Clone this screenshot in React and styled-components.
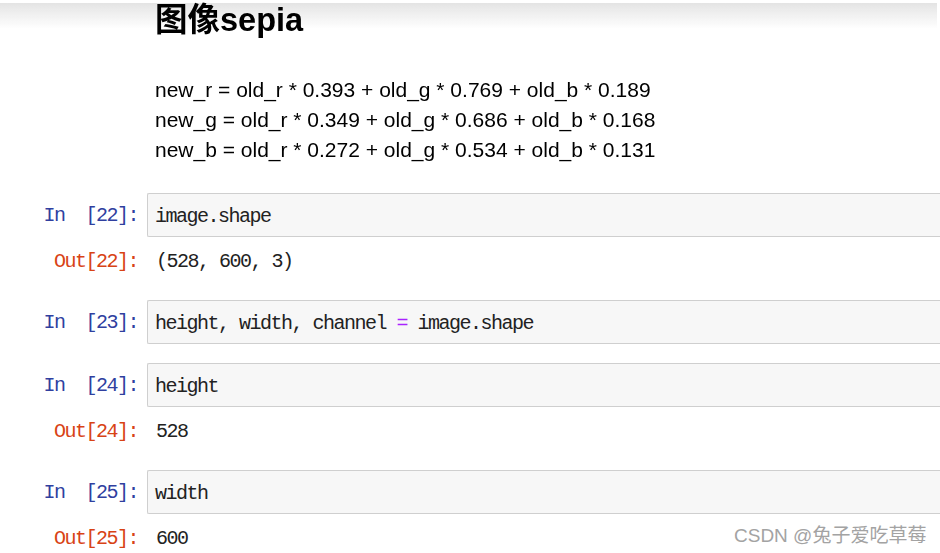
import React from "react";
import styled, { createGlobalStyle } from "styled-components";

const Global = createGlobalStyle`
  html, body { margin: 0; padding: 0; background: #fff; overflow: hidden; }
  body { width: 940px; height: 553px; position: relative; }
`;

const Page = styled.div`
  width: 960px;
  position: relative;
`;

const TopShade = styled.div`
  position: fixed;
  top: 3px;
  left: 0;
  width: 937px;
  height: 26px;
  z-index: 0;
  background: linear-gradient(to bottom, rgba(225,225,225,0.9), rgba(255,255,255,0));
  pointer-events: none;
`;

const Markdown = styled.div`
  position: relative;
  z-index: 1;
  padding-left: 155px;
  font-family: "Liberation Sans", Arial, "Noto Sans CJK SC", sans-serif;
  color: #000;
`;

const Heading = styled.h2`
  margin: 0;
  font-size: 32.5px;
  line-height: 41px;
  font-weight: bold;
  font-family: "Liberation Sans", "Noto Sans CJK SC", sans-serif;
`;

const Formula = styled.div`
  margin-top: 34px;
  font-size: 21px;
  line-height: 30px;
`;

const Cells = styled.div`
  margin-top: 28px;
  display: flex;
  flex-direction: column;
  gap: 19px;
`;

const Cell = styled.div`
  display: flex;
  flex-direction: column;
`;

const Row = styled.div`
  display: grid;
  grid-template-columns: 147px 1fr;
  align-items: center;
  font-family: "Liberation Mono", "Courier New", monospace;
  font-size: 20px;
  letter-spacing: -1.5px;
  white-space: pre;
`;

const Prompt = styled.div`
  text-align: right;
  padding-right: 9px;
  color: ${(p) => (p.$out ? "#D84315" : "#303F9F")};
`;

const InputBox = styled.div`
  height: 42px;
  line-height: 45px;
  border: 1px solid #cfcfcf;
  border-right: none;
  border-radius: 2px 0 0 2px;
  background: #f7f7f7;
  padding-left: 7px;
  color: #222;
`;

const OutRow = styled(Row)`
  padding-top: 12px;
  padding-bottom: 6px;
  line-height: 26px;
`;

const OutText = styled.div`
  padding-left: 9px;
  color: #222;
`;

const Op = styled.span`
  color: #AA22FF;
`;

const Watermark = styled.div`
  position: absolute;
  left: 734px;
  top: 520px;
  font-family: "Liberation Sans", "Noto Sans CJK SC", sans-serif;
  font-size: 19px;
  color: #a3a3a3;
  white-space: nowrap;
`;

const cells = [
  { n: 22, code: "image.shape", out: "(528, 600, 3)" },
  { n: 23, code: <>height, width, channel <Op>=</Op> image.shape</> },
  { n: 24, code: "height", out: "528" },
  { n: 25, code: "width", out: "600" },
];

export default function App() {
  return (
    <Page>
      <Global />
      <TopShade />
      <Markdown>
        <Heading>图像sepia</Heading>
        <Formula>
          <div>new_r = old_r * 0.393 + old_g * 0.769 + old_b * 0.189</div>
          <div>new_g = old_r * 0.349 + old_g * 0.686 + old_b * 0.168</div>
          <div>new_b = old_r * 0.272 + old_g * 0.534 + old_b * 0.131</div>
        </Formula>
      </Markdown>
      <Cells>
        {cells.map((c) => (
          <Cell key={c.n}>
            <Row>
              <Prompt>{`In  [${c.n}]:`}</Prompt>
              <InputBox>{c.code}</InputBox>
            </Row>
            {c.out && (
              <OutRow>
                <Prompt $out>{`Out[${c.n}]:`}</Prompt>
                <OutText>{c.out}</OutText>
              </OutRow>
            )}
          </Cell>
        ))}
      </Cells>
      <Watermark>CSDN @兔子爱吃草莓</Watermark>
    </Page>
  );
}
